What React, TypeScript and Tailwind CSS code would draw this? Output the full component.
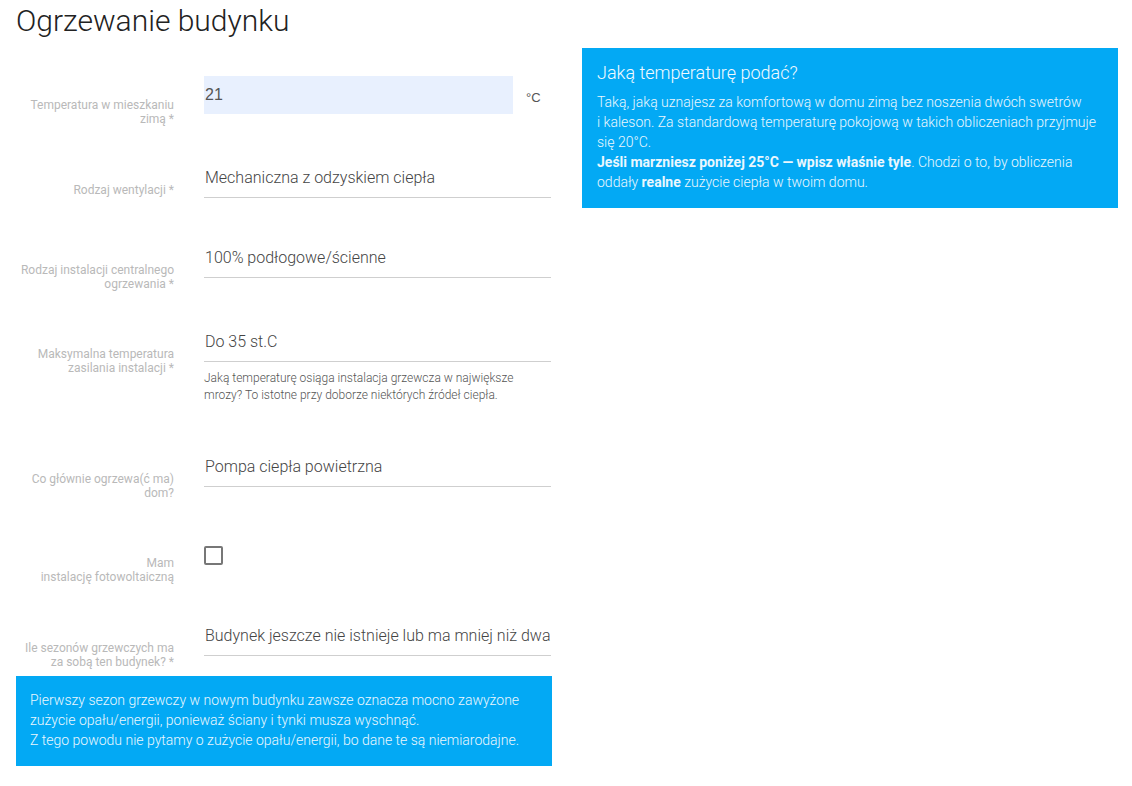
import React from 'react';

const font = { fontFamily: 'Roboto, "Noto Sans", sans-serif' };

type RowProps = {
  label: React.ReactNode;
  labelTop?: string;
  height: string;
  children: React.ReactNode;
};

// One form row: right-aligned caption on the left, the control on the right
function Row({ label, labelTop = 'pt-[24px]', height, children }: RowProps) {
  return (
    <div className={`flex items-start ${height}`}>
      <div className={`w-[158px] shrink-0 text-right text-[12px] leading-[14px] text-[#b9b9b9] ${labelTop}`}>
        {label}
      </div>
      <div className="ml-[30px] w-[347px]">{children}</div>
    </div>
  );
}

function SelectField({ value }: { value: string }) {
  return (
    <div className="flex h-[39px] items-center overflow-hidden whitespace-nowrap border-b border-[#cfcfcf] pl-px text-[16px] font-light text-[#444]">
      {value}
    </div>
  );
}

export default function App() {
  return (
    <div className="w-[1132px] bg-white" style={font}>
      <h1 className="pl-4 pt-[4px] text-[30px] font-light leading-[33px] text-[#222]">
        Ogrzewanie budynku
      </h1>

      <div className="mt-[11px] flex items-start">
        {/* form column */}
        <div className="w-[566px] shrink-0 pl-4 pr-[14px]">
          <div className="pt-[28px]">
            <Row label={<>Temperatura w mieszkaniu<br />zimą *</>} labelTop="pt-[22px]" height="h-[83px]">
              <div className="flex items-center">
                <div
                  className="flex h-[38px] w-[309px] items-center bg-[#e8f0fe] pl-px text-[16px] text-[#555]"
                  style={{ fontFamily: '"Liberation Sans", Arial, sans-serif' }}
                >
                  21
                </div>
                <span
                  className="ml-[13px] mt-[6px] text-[13px] text-[#555]"
                  style={{ fontFamily: '"Liberation Sans", Arial, sans-serif' }}
                >
                  °C
                </span>
              </div>
            </Row>

            <Row label="Rodzaj wentylacji *" height="h-[80px]">
              <SelectField value="Mechaniczna z odzyskiem ciepła" />
            </Row>

            <Row label={<>Rodzaj instalacji centralnego<br />ogrzewania *</>} height="h-[84px]">
              <SelectField value="100% podłogowe/ścienne" />
            </Row>

            <Row label={<>Maksymalna temperatura<br />zasilania instalacji *</>} height="h-[125px]">
              <SelectField value="Do 35 st.C" />
              <p className="mt-[8px] text-[12px] font-light leading-[17px] text-[#555]">
                Jaką temperaturę osiąga instalacja grzewcza w największe mrozy? To istotne przy doborze niektórych źródeł ciepła.
              </p>
            </Row>

            <Row label={<>Co głównie ogrzewa(ć ma)<br />dom?</>} height="h-[84px]">
              <SelectField value="Pompa ciepła powietrzna" />
            </Row>

            <Row label={<>Mam<br />instalację fotowoltaiczną</>} height="h-[85px]">
              <div className="pt-[14px]">
                <div className="h-[19px] w-[19px] rounded-[2px] border-2 border-[#777]" />
              </div>
            </Row>

            <Row label={<>Ile sezonów grzewczych ma<br />za sobą ten budynek? *</>} height="h-[59px]">
              <SelectField value="Budynek jeszcze nie istnieje lub ma mniej niż dwa" />
            </Row>
          </div>

          <div className="w-[536px] bg-[#03a9f4] px-[14px] pb-[16px] pt-[14px] text-[14px] font-light leading-[20px] text-[#eaf7fe]">
            Pierwszy sezon grzewczy w nowym budynku zawsze oznacza mocno zawyżone zużycie opału/energii, ponieważ ściany i tynki musza wyschnąć.
            <br />
            Z tego powodu nie pytamy o zużycie opału/energii, bo dane te są niemiarodajne.
          </div>
        </div>

        {/* hint column */}
        <div className="w-[566px] shrink-0 pl-4 pr-[14px]">
          <div className="bg-[#03a9f4] px-[15px] pb-[16px] pt-[14px] text-[#eaf7fe]">
            <h2 className="text-[18px] font-light leading-[21px] text-[#f2faff]">Jaką temperaturę podać?</h2>
            <p className="mt-[9px] text-[14px] font-light leading-[20px]">
              Taką, jaką uznajesz za komfortową w domu zimą bez noszenia dwóch swetrów i{'\u00a0'}kaleson. Za standardową temperaturę pokojową w takich obliczeniach przyjmuje się{'\u00a0'}20°C.
              <br />
              <b className="font-bold">Jeśli marzniesz poniżej 25°C — wpisz właśnie tyle</b>. Chodzi o to, by obliczenia oddały <b className="font-bold">realne</b> zużycie ciepła w twoim domu.
            </p>
          </div>
        </div>
      </div>
    </div>
  );
}
